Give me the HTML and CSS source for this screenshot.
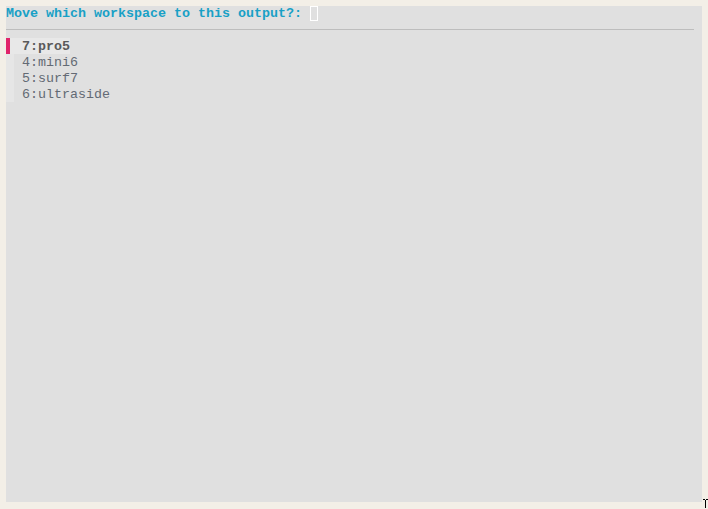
FILE: index.html
```html
<!DOCTYPE html>
<html>
<head>
<meta charset="utf-8">
<link rel="stylesheet" href="styles.css">
</head>
<body>
<div class="panel">
  <div class="prompt"><span class="label">Move which workspace to this output?: </span><span class="cursor"></span></div>
  <div class="sep"></div>
  <ul class="list">
    <li class="item selected"><span class="mark"></span><span class="text">7:pro5</span></li>
    <li class="item"><span class="mark"></span><span class="text">4:mini6</span></li>
    <li class="item"><span class="mark"></span><span class="text">5:surf7</span></li>
    <li class="item"><span class="mark"></span><span class="text">6:ultraside</span></li>
  </ul>
</div>
<svg class="mouse" width="5" height="10" viewBox="0 0 5 10"><path d="M0 0.5H2M3 0.5H5M2.5 1V9" stroke="#000" stroke-width="1" fill="none"/></svg>
</body>
</html>
```
FILE: styles.css
```css
html, body {
  margin: 0;
  padding: 0;
}
body {
  background: #f3efe7;
  width: 708px;
  height: 509px;
  overflow: hidden;
  position: relative;
  font-family: "Liberation Mono", monospace;
  font-size: 13.33px;
}
.panel {
  margin: 6px;
  width: 696px;
  height: 496px;
  background: #e0e0e0;
  box-sizing: border-box;
}
.prompt {
  height: 16px;
  line-height: 16px;
  display: flex;
  align-items: center;
  white-space: pre;
}
.label {
  color: #18a0c6;
  font-weight: bold;
}
.cursor {
  width: 6px;
  height: 13px;
  border: 1px solid #ffffff;
  margin-top: -1px;
}
.sep {
  margin-top: 7px;
  width: 688px;
  height: 1px;
  background: #bdbdbd;
}
.list {
  list-style: none;
  margin: 8px 0 0 0;
  padding: 0;
}
.item {
  display: flex;
  height: 16px;
  color: #636a74;
}
.text {
  line-height: 16px;
  padding-top: 1px;
  box-sizing: border-box;
  height: 16px;
}
.mark {
  width: 8px;
  flex: none;
  background: #e6e6e6;
  margin-right: 8px;
}
.item.selected .mark {
  background: #e0246a;
  border-right: 4px solid #e8e8e8;
  width: 4px;
  margin-right: 0;
}
.item.selected .text {
  background: #e8e8e8;
  padding-left: 8px;
  font-weight: bold;
  color: #5a5a5a;
}
.mouse {
  position: absolute;
  left: 703px;
  top: 499px;
}
```
